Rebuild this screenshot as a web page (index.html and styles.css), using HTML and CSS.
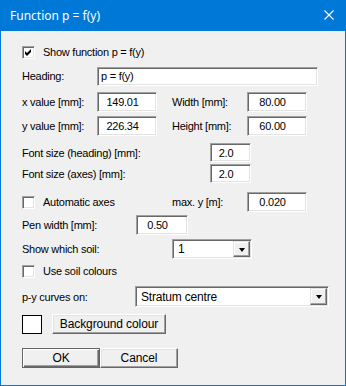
FILE: index.html
```html
<!DOCTYPE html>
<html lang="en">
<head>
    <meta charset="UTF-8">
    <title>Function p = f(y)</title>
    <link rel="stylesheet" href="styles.css">
</head>
<body>
    <div class="window">
        <div class="titlebar">
            <span class="title">Function p = f(y)</span>
            <svg class="close" width="10" height="10" viewBox="0 0 10 10">
                <path d="M0.5 0.5 L9.5 9.5 M9.5 0.5 L0.5 9.5" stroke="#fff" stroke-width="1.1" fill="none"/>
            </svg>
        </div>

        <div class="client">
            <!-- show function -->
            <div class="row r-show">
                <span class="check">
                    <svg width="9" height="9" viewBox="0 0 9 9"><path d="M1 3 L3 5 L7 1 L7 4 L3 8 L1 6 Z" fill="#000"/></svg>
                </span>
                <span>Show function p = f(y)</span>
            </div>

            <div class="row r-heading">
                <label class="lbl w75">Heading:</label>
                <input class="field text-left heading" type="text" value="p = f(y)">
            </div>

            <div class="row r-x">
                <label class="lbl w75">x value [mm]:</label>
                <input class="field w60" type="text" value="149.01">
                <label class="lbl w75 ml15">Width [mm]:</label>
                <input class="field w60" type="text" value="80.00">
            </div>

            <div class="row r-y">
                <label class="lbl w75">y value [mm]:</label>
                <input class="field w60" type="text" value="226.34">
                <label class="lbl w75 ml15">Height [mm]:</label>
                <input class="field w60" type="text" value="60.00">
            </div>

            <div class="row r-font1 short">
                <label class="lbl w188">Font size (heading) [mm]:</label>
                <input class="field w41" type="text" value="2.0">
            </div>

            <div class="row r-font2 short">
                <label class="lbl w188">Font size (axes) [mm]:</label>
                <input class="field w41" type="text" value="2.0">
            </div>

            <div class="row r-auto">
                <div class="lbl w150 checkline">
                    <span class="check"></span>
                    <span>Automatic axes</span>
                </div>
                <label class="lbl w75">max. y [m]:</label>
                <input class="field w60" type="text" value="0.020">
            </div>

            <div class="row r-pen">
                <label class="lbl w114">Pen width [mm]:</label>
                <input class="field w52" type="text" value="0.50">
            </div>

            <div class="row r-soil">
                <label class="lbl w150">Show which soil:</label>
                <div class="combo w80">
                    <span class="combo-text">1</span>
                    <span class="combo-btn"><span class="arrow"></span></span>
                </div>
            </div>

            <div class="row r-colours">
                <span class="check"></span>
                <span>Use soil colours</span>
            </div>

            <div class="row r-curves tall">
                <label class="lbl w113">p-y curves on:</label>
                <div class="combo w194">
                    <span class="combo-text">Stratum centre</span>
                    <span class="combo-btn"><span class="arrow"></span></span>
                </div>
            </div>

            <div class="row r-bg">
                <span class="swatch"></span>
                <button class="btn w114">Background colour</button>
            </div>

            <div class="row r-buttons">
                <button class="btn default w78">OK</button>
                <button class="btn w78 ml35">Cancel</button>
            </div>
        </div>
    </div>
</body>
</html>
```

FILE: styles.css
```css
body {
  margin: 0;
  font-family: "Liberation Sans", Arial, sans-serif;
  font-size: 11px;
  letter-spacing: -0.25px;
  color: #000;
}

/* window frame */
.window {
  width: 346px;
  height: 386px;
  background-color: #0078d7;
  display: flex;
  flex-direction: column;
}

.titlebar {
  height: 31px;
  flex: none;
  display: flex;
  align-items: center;
  justify-content: space-between;
  padding: 0 12px 0 10px;
  color: #fff;
  font-family: "Noto Sans", "Open Sans", sans-serif;
  font-size: 12px;
  letter-spacing: 0;
}

.title {
  margin-top: -1px;
}

.close {
  margin-top: -1px;
}

.client {
  flex: 1;
  margin: 0 1px 1px 1px;
  background-color: #f0f0f0;
  padding: 11px 0 0 21px;
}

/* rows */
.row {
  display: flex;
  align-items: center;
  height: 20px;
}

.row.short {
  height: 19px;
}

.row.tall {
  height: 21px;
}

.r-heading { margin-top: 4px; }
.r-x { margin-top: 6px; }
.r-y { margin-top: 4px; }
.r-font1 { margin-top: 7px; }
.r-font2 { margin-top: 2px; }
.r-auto { margin-top: 9px; }
.r-pen { margin-top: 3px; }
.r-soil { margin-top: 4px; }
.r-colours { margin-top: 2px; }
.r-curves { margin-top: 5px; }
.r-bg { margin-top: 7px; }
.r-buttons { margin-top: 14px; }

.lbl {
  flex: none;
  white-space: nowrap;
}

.w75 { width: 75px; }
.w113 { width: 113px; }
.w114 { width: 114px; }
.w150 { width: 150px; }
.w188 { width: 188px; }
.w41 { width: 41px; }
.w52 { width: 52px; }
.w60 { width: 60px; }
.w78 { width: 78px; }
.w80 { width: 80px; }
.w194 { width: 194px; }
.ml15 { margin-left: 15px; }
.ml35 { margin-left: 35px; }

/* sunken edit fields */
.field {
  box-sizing: border-box;
  height: 100%;
  margin: 0;
  padding: 0 9px 0 0;
  background-color: #fff;
  border: 1px solid;
  border-color: #a0a0a0 #fff #fff #a0a0a0;
  box-shadow: inset 1px 1px 0 #696969, inset -1px -1px 0 #e3e3e3;
  font-family: inherit;
  font-size: 11px;
  letter-spacing: -0.25px;
  color: #000;
  text-align: center;
  outline: none;
}

.field.text-left {
  text-align: left;
  padding: 0 0 0 3px;
}

.heading {
  width: 221px;
  height: 19px;
}

/* checkboxes */
.check {
  box-sizing: border-box;
  width: 13px;
  height: 13px;
  margin-right: 8px;
  flex: none;
  background-color: #fff;
  border: 1px solid;
  border-color: #a0a0a0 #fff #fff #a0a0a0;
  box-shadow: inset 1px 1px 0 #696969, inset -1px -1px 0 #e3e3e3;
  display: flex;
  align-items: center;
  justify-content: center;
}

.check svg {
  display: block;
  margin: 1px 0 0 0;
}

.checkline {
  display: flex;
  align-items: center;
}

/* combo boxes */
.combo {
  box-sizing: border-box;
  height: 100%;
  display: flex;
  align-items: stretch;
  background-color: #fff;
  border: 1px solid;
  border-color: #a0a0a0 #fff #fff #a0a0a0;
  box-shadow: inset 1px 1px 0 #696969, inset -1px -1px 0 #e3e3e3;
  padding: 1px;
}

.combo-text {
  flex: 1;
  display: flex;
  align-items: center;
  padding-left: 4px;
  font-size: 12px;
  letter-spacing: -0.2px;
}

.combo-btn {
  box-sizing: border-box;
  width: 17px;
  flex: none;
  background-color: #f0f0f0;
  border: 1px solid;
  border-color: #e3e3e3 #696969 #696969 #e3e3e3;
  box-shadow: inset -1px -1px 0 #a0a0a0, inset 1px 1px 0 #fff;
  display: flex;
  align-items: center;
  justify-content: center;
}

.arrow {
  width: 0;
  height: 0;
  border-left: 3.5px solid transparent;
  border-right: 3.5px solid transparent;
  border-top: 4px solid #000;
  margin-top: 1px;
}

/* buttons */
.btn {
  box-sizing: border-box;
  height: 20px;
  margin: 0;
  padding: 0;
  background-color: #f0f0f0;
  border: 1px solid;
  border-color: #fff #696969 #696969 #fff;
  box-shadow: inset -1px -1px 0 #a0a0a0, inset 1px 1px 0 #e3e3e3;
  font-family: inherit;
  font-size: 12px;
  letter-spacing: -0.1px;
  color: #000;
}

.btn.default {
  border-color: #646464;
  box-shadow: inset 1px 1px 0 #fff, inset -1px -1px 0 #696969, inset -2px -2px 0 #a0a0a0;
}

.swatch {
  box-sizing: border-box;
  width: 20px;
  height: 19px;
  margin-right: 10px;
  background-color: #fff;
  border: 1px solid #000;
}
```
